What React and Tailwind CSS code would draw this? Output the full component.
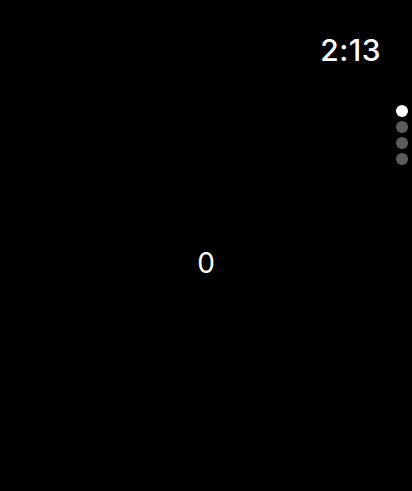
export default function App() {
  return (
    <div className="w-[412px] h-[491px] bg-black text-white flex flex-col overflow-hidden" style={{ fontFamily: "Inter, 'Noto Sans', sans-serif" }}>
      <div className="flex justify-end pr-[31px] pt-[32px] h-[80px]">
        <span className="text-[30px] leading-[36px] font-medium tracking-[0.5px]">2:13</span>
      </div>
      <div className="flex flex-1">
        <div className="flex-1 flex items-center justify-center pb-[46px] pl-[16px]">
          <span className="text-[28px] leading-none">0</span>
        </div>
        <div className="flex flex-col gap-[4px] pt-[25px] pr-[4px] items-center">
          <div className="w-[12px] h-[12px] rounded-full bg-white" />
          <div className="w-[12px] h-[12px] rounded-full bg-[#5c5c5c]" />
          <div className="w-[12px] h-[12px] rounded-full bg-[#5c5c5c]" />
          <div className="w-[12px] h-[12px] rounded-full bg-[#5c5c5c]" />
        </div>
      </div>
    </div>
  );
}
